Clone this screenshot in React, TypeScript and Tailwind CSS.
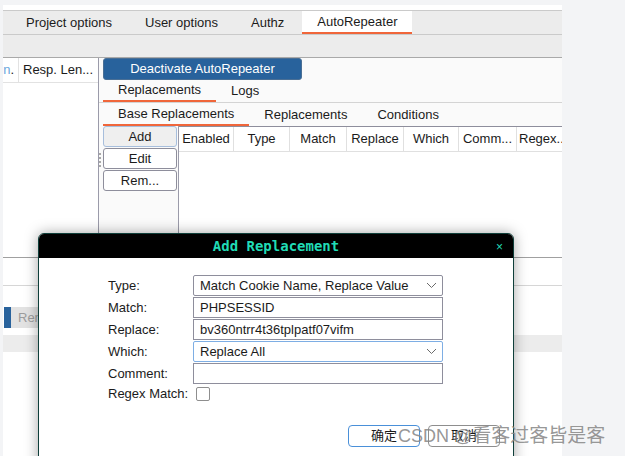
import React from 'react';

const topTabs: [string, string][] = [
  ['Project options', ''],
  ['User options', 'ml-[1px]'],
  ['Authz', 'ml-[1px]'],
  ['AutoRepeater', ''],
];
const cols: [string, string][] = [
  ['Enabled', 'w-[55px]'],
  ['Type', 'w-[56px]'],
  ['Match', 'w-[57px]'],
  ['Replace', 'w-[57px]'],
  ['Which', 'w-[55px]'],
  ['Comm...', 'w-[58px]'],
];

function Chevron() {
  return (
    <svg width="11" height="7" viewBox="0 0 11 7" className="shrink-0">
      <polyline points="1,1 5.5,5.5 10,1" fill="none" stroke="#6b6b6b" strokeWidth="1" />
    </svg>
  );
}

export default function App() {
  return (
    <div className="relative h-[456px] w-[625px] overflow-hidden bg-[#f3f4f6] font-['Liberation_Sans','Noto_Sans_CJK_SC',sans-serif] text-[13px] text-[#1b1b1b]">
      <div className="ml-[3px] mt-[5px] flex h-[451px] w-[559px] flex-col">
        <div className="h-[5px] bg-white" />

        {/* top tabs */}
        <div className="flex h-[25px] gap-[2px] border-y border-[#cacaca] bg-[#ececec] pl-[8px]">
          {topTabs.map(([t, m]) => (
            <div
              key={t}
              className={
                t === 'AutoRepeater'
                  ? 'ml-[1px] flex items-center border-b-2 border-[#f0663a] bg-white px-[15px]'
                  : `${m} flex items-center px-[15px]`
              }
            >
              {t}
            </div>
          ))}
        </div>

        {/* toolbar */}
        <div className="h-[23px] border-b border-[#a9a9a9] bg-[#ececec]" />

        {/* main split */}
        <div className="flex h-[200px] border-b border-[#a0a0a0]">
          <div className="w-[96px] shrink-0 border-r border-[#9b9baa] bg-white">
            <div className="flex h-[25px] border-b border-[#e2e2e2]">
              <div className="flex w-[16px] shrink-0 items-center justify-end overflow-hidden border-r border-[#e2e2e2] pr-[4px]">
                <span className="text-[#6aa6dc]">n</span>.
              </div>
              <div className="flex items-center whitespace-nowrap pl-[4px]">Resp. Len...</div>
            </div>
          </div>

          <div className="flex min-w-0 flex-1 flex-col bg-[#fafafa]">
            <div className="pl-[4px]">
              <button className="flex h-[22px] w-[199px] items-center justify-center rounded-[3px] border border-[#4a6f95] bg-[#28629c] text-white">
                Deactivate AutoRepeater
              </button>
            </div>

            <div className="flex h-[23px] border-b border-[#d4d4d4] pl-[4px]">
              <div className="flex items-center border-b-2 border-[#f0663a] px-[15px]">Replacements</div>
              <div className="flex items-center px-[15px]">Logs</div>
            </div>

            <div className="flex h-[23px] pl-[4px]">
              <div className="flex items-center border-b-2 border-[#f0663a] px-[15px]">Base Replacements</div>
              <div className="flex items-center px-[15px]">Replacements</div>
              <div className="flex items-center px-[15px]">Conditions</div>
            </div>

            <div className="flex min-w-0 flex-1">
              <div className="relative flex w-[80px] shrink-0 flex-col gap-[1px] border-r border-[#9b9baa] pl-[4px]">
                <button className="h-[21px] w-[74px] rounded-[3px] border border-[#a7bedc] bg-[#efefef]">Add</button>
                <button className="h-[21px] w-[74px] rounded-[3px] border border-[#8e8e9c] bg-white">Edit</button>
                <button className="h-[21px] w-[74px] rounded-[3px] border border-[#8e8e9c] bg-white">Rem...</button>
                <div className="absolute left-[0px] top-[27px] flex flex-col gap-[2px]">
                  <span className="h-[2px] w-[2px] bg-[#a8a8a8]" />
                  <span className="h-[2px] w-[2px] bg-[#a8a8a8]" />
                  <span className="h-[2px] w-[2px] bg-[#a8a8a8]" />
                  <span className="h-[2px] w-[2px] bg-[#a8a8a8]" />
                </div>
              </div>
              <div className="min-w-0 flex-1 overflow-hidden border-t border-[#8e8e9c] bg-white">
                <div className="flex h-[25px] border-b border-[#e0e0e0]">
                  {cols.map(([c, w]) => (
                    <div key={c} className={`${w} flex shrink-0 items-center justify-center whitespace-nowrap border-r border-[#e0e0e0]`}>
                      {c}
                    </div>
                  ))}
                  <div className="flex items-center whitespace-nowrap pl-[2px]">Regex..</div>
                </div>
              </div>
            </div>
          </div>
        </div>

        {/* lower pane */}
        <div className="flex-1 bg-white">
          <div className="h-[28px] border-b border-[#d6d6d6]" />
          <div className="h-[21px]" />
          <div className="flex h-[21px]">
            <div className="ml-[1px] w-[7px] bg-[#28629c]" />
            <div className="flex w-[120px] items-center bg-[#e2e2e2] pl-[7px] text-[#9c9c9c]">Render</div>
          </div>
          <div className="h-[7px]" />
          <div className="h-[17px] bg-[#ececec]" />
        </div>
      </div>

      {/* dialog */}
      <div className="absolute left-[38px] top-[233px] h-[240px] w-[476px] overflow-hidden rounded-t-[6px] border border-[#0f3f3a] bg-white shadow-[0_0_14px_rgba(0,0,0,0.35)]">
        <div className="relative flex h-[24px] items-center justify-center bg-black">
          <span className="font-['DejaVu_Sans_Mono',monospace] text-[14px] font-bold text-[#20dcb6]">Add Replacement</span>
          <span className="absolute right-[10px] top-[4px] text-[12px] text-[#20dcb6]">×</span>
        </div>

        <div className="grid grid-cols-[85px_250px] gap-y-[1px] pl-[69px] pt-[17px]">
          <div className="flex h-[21px] items-center">Type:</div>
          <div className="flex h-[21px] items-center justify-between rounded-[2px] border border-[#8e8e9c] pl-[6px] pr-[5px]">
            <span>Match Cookie Name, Replace Value</span>
            <Chevron />
          </div>

          <div className="flex h-[21px] items-center">Match:</div>
          <div className="flex h-[21px] items-center border border-[#8e8e9c] pl-[6px]">PHPSESSID</div>

          <div className="flex h-[21px] items-center">Replace:</div>
          <div className="flex h-[21px] items-center border border-[#8e8e9c] pl-[6px]">bv360ntrr4t36tplpatf07vifm</div>

          <div className="flex h-[21px] items-center">Which:</div>
          <div className="flex h-[21px] items-center justify-between rounded-[2px] border border-[#7eaee4] pl-[6px] pr-[5px]">
            <span>Replace All</span>
            <Chevron />
          </div>

          <div className="flex h-[21px] items-center">Comment:</div>
          <div className="h-[21px] border border-[#8e8e9c]" />

          <div className="col-span-2 flex h-[18px] items-center">
            <span>Regex Match:</span>
            <span className="ml-[8px] h-[14px] w-[14px] rounded-[2px] border border-[#8e8e8e] bg-white" />
          </div>
        </div>

        <div className="mt-[22px] flex justify-end gap-[8px] pr-[13px]">
          <button className="h-[22px] w-[72px] rounded-[4px] border border-[#4a90d9] bg-white">确定</button>
          <button className="h-[22px] w-[72px] rounded-[4px] border border-[#8e8e8e] bg-white">取消</button>
        </div>
      </div>

      {/* watermark */}
      <div className="pointer-events-none absolute left-[398px] top-[423px] whitespace-nowrap leading-[26px] text-[#8a8a8a]/90">
        <span className="text-[18px]">CSDN @</span>
        <span className="text-[19px]">看客过客皆是客</span>
      </div>
    </div>
  );
}
